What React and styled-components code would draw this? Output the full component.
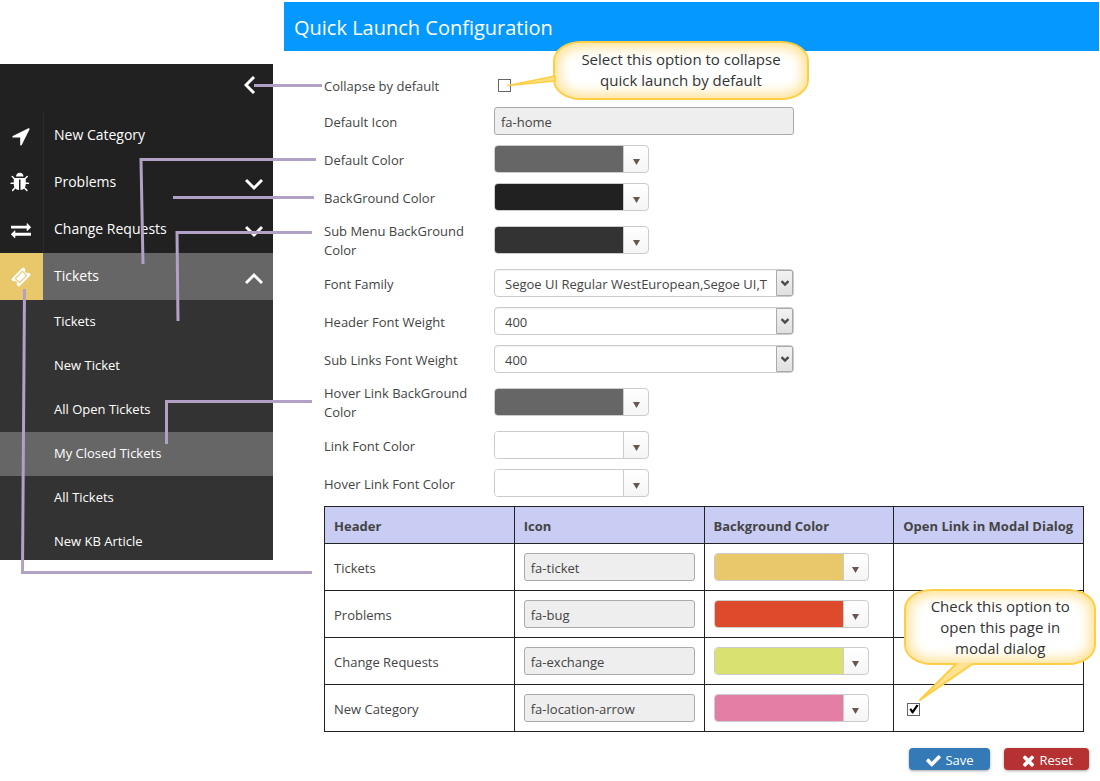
import React from 'react'
import styled, { createGlobalStyle } from 'styled-components'

const icons = {
  arrow:
    'M1593 349l-640 1280q-17 35-57 35-5 0-15-2-22-5-35.5-22.5t-13.5-39.5v-576h-576q-22 0-39.5-13.5t-22.5-35.5 4-42 29-30l1280-640q13-7 29-7 27 0 45 19 15 14 18.5 34.5t-6.5 39.5z',
  bug: 'M1632 960q0 26-19 45t-45 19h-224q0 171-67 290l208 209q19 19 19 45t-19 45q-18 19-45 19t-45-19l-198-197q-5 5-15 13t-42 28.5-65 36.5-82 29-97 13v-896h-128v896q-51 0-101.5-13.5t-87-33-66-39-43.5-32.5l-15-14-183 207q-20 21-48 21-24 0-43-16-19-18-20.5-44.5t15.5-46.5l202-227q-58-114-58-274h-224q-26 0-45-19t-19-45 19-45 45-19h224v-294l-173-173q-19-19-19-45t19-45 45-19 45 19l173 173h844l173-173q19-19 45-19t45 19 19 45-19 45l-173 173v294h224q26 0 45 19t19 45zm-480-576h-640q0-133 93.5-226.5t226.5-93.5 226.5 93.5 93.5 226.5z',
  exchange:
    'M1792 1184v192q0 13-9.5 22.5t-22.5 9.5h-1376v192q0 13-9.5 22.5t-22.5 9.5q-12 0-24-10l-319-320q-9-9-9-22 0-14 9-23l320-320q9-9 23-9 13 0 22.5 9.5t9.5 22.5v192h1376q13 0 22.5 9.5t9.5 22.5zm0-544q0 14-9 23l-320 320q-9 9-23 9-13 0-22.5-9.5t-9.5-22.5v-192h-1376q-13 0-22.5-9.5t-9.5-22.5v-192q0-13 9.5-22.5t22.5-9.5h1376v-192q0-14 9-23t23-9q12 0 24 10l319 319q9 9 9 23z',
  ticket:
    'M1024 452l316 316-572 572-316-316zm-211 979l618-618q19-19 19-45t-19-45l-362-362q-18-18-45-18t-45 18l-618 618q-19 19-19 45t19 45l362 362q18 18 45 18t45-18zm889-637l-907 908q-37 37-90.5 37t-90.5-37l-126-125q56-56 56-136t-56-136-136-56-136 56l-125-126q-37-37-37-90.5t37-90.5l907-906q37-37 90.5-37t90.5 37l125 125q-56 56-56 136t56 136 136 56 136-56l126 125q37 37 37 90.5t-37 90.5z',
  check:
    'M1671 566q0 40-28 68l-724 724-136 136q-28 28-68 28t-68-28l-136-136-362-362q-28-28-28-68t28-68l136-136q28-28 68-28t68 28l294 295 656-657q28-28 68-28t68 28l136 136q28 28 28 68z',
  times:
    'M1490 1322q0 40-28 68l-136 136q-28 28-68 28t-68-28l-294-294-294 294q-28 28-68 28t-68-28l-136-136q-28-28-28-68t28-68l294-294-294-294q-28-28-28-68t28-68l136-136q28-28 68-28t68 28l294 294 294-294q28-28 68-28t68 28l136 136q28 28 28 68t-28 68l-294 294 294 294q28 28 28 68z',
}

const Icon = ({ name, size }) => (
  <svg width={size} height={size} viewBox='0 0 1792 1792' fill='currentColor' aria-hidden='true'>
    <path d={icons[name]} />
  </svg>
)

const chevrons = {
  left: 'M10 1 L2 9 L10 17',
  down: 'M1 5 L9 13 L17 5',
  up: 'M1 14 L9 6 L17 14',
}

const Chevron = ({ dir }) => (
  <svg width='18' height='18' viewBox='0 0 18 18' fill='none' stroke='#fff' strokeWidth='3' aria-hidden='true'>
    <path d={chevrons[dir]} />
  </svg>
)

const menu = [
  { name: 'New Category', icon: 'arrow', size: 22 },
  { name: 'Problems', icon: 'bug', size: 21, chevron: 'down' },
  { name: 'Change Requests', icon: 'exchange', size: 20, chevron: 'down' },
  { name: 'Tickets', icon: 'ticket', size: 20, chevron: 'up', active: true },
]

const subMenu = ['Tickets', 'New Ticket', 'All Open Tickets', 'My Closed Tickets', 'All Tickets', 'New KB Article']

const fields = [
  { id: 'icon', label: 'Default Icon', type: 'text', value: 'fa-home' },
  { id: 'color', label: 'Default Color', type: 'color', value: '#666666' },
  { id: 'bg', label: 'BackGround Color', type: 'color', value: '#212121' },
  { id: 'sub-bg', label: 'Sub Menu BackGround Color', type: 'color', value: '#333333' },
  { id: 'font', label: 'Font Family', type: 'select', value: 'Segoe UI Regular WestEuropean,Segoe UI,T' },
  { id: 'header-weight', label: 'Header Font Weight', type: 'select', value: '400' },
  { id: 'sub-weight', label: 'Sub Links Font Weight', type: 'select', value: '400' },
  { id: 'hover-bg', label: 'Hover Link BackGround Color', type: 'color', value: '#666666' },
  { id: 'link', label: 'Link Font Color', type: 'color', value: '#ffffff' },
  { id: 'hover-link', label: 'Hover Link Font Color', type: 'color', value: '#ffffff' },
]

const rows = [
  { name: 'Tickets', icon: 'fa-ticket', color: '#e9c86c' },
  { name: 'Problems', icon: 'fa-bug', color: '#de4a2c' },
  { name: 'Change Requests', icon: 'fa-exchange', color: '#d9e170' },
  { name: 'New Category', icon: 'fa-location-arrow', color: '#e47ea5', modal: true },
]

const ColorPicker = ({ id, color, label }) => (
  <Picker type='button' id={id} aria-label={label}>
    <Swatch $color={color} />
    <PickerArrow>
      <svg width='7' height='6' viewBox='0 0 7 6' aria-hidden='true'>
        <path d='M0 0h7L3.5 6z' fill='#665850' />
      </svg>
    </PickerArrow>
  </Picker>
)

const Field = ({ id, type, value, label }) => {
  if (type === 'color') return <ColorPicker id={id} color={value} label={label} />
  if (type === 'text') return <TextInput id={id} defaultValue={value} />
  return (
    <SelectBox>
      <Select id={id} defaultValue={value}>
        <option>{value}</option>
      </Select>
      <SelectArrow>
        <svg width='8' height='7' viewBox='0 0 8 7' aria-hidden='true'>
          <path d='M0.5 1L4 4.5L7.5 1' fill='none' stroke='#4a4a4a' strokeWidth='2.4' />
        </svg>
      </SelectArrow>
    </SelectBox>
  )
}

const App = () => {
  return (
    <Page>
      <GlobalStyle />
      <Sidebar>
        <SidebarTop>
          <IconButton type='button' aria-label='Collapse'>
            <Chevron dir='left' />
          </IconButton>
        </SidebarTop>
        {menu.map((item) => (
          <MenuItem key={item.name} href='#' $active={item.active}>
            <MenuIcon $active={item.active}>
              <Icon name={item.icon} size={item.size} />
            </MenuIcon>
            <MenuText>{item.name}</MenuText>
            {item.chevron && (
              <MenuChevron>
                <Chevron dir={item.chevron} />
              </MenuChevron>
            )}
          </MenuItem>
        ))}
        <SubMenu>
          {subMenu.map((name) => (
            <SubLink key={name} href='#' $active={name === 'My Closed Tickets'}>
              {name}
            </SubLink>
          ))}
        </SubMenu>
      </Sidebar>

      <Main>
        <Title>Quick Launch Configuration</Title>
        <Body>
          <FormRow $short>
            <Label htmlFor='collapse'>Collapse by default</Label>
            <CheckHolder>
              <Checkbox id='collapse' />
              <CollapseCallout>
                <svg width='50' height='20' viewBox='0 0 50 20' aria-hidden='true'>
                  <path d='M49 5L2 14.5L49 10z' fill='#ffdf80' stroke='#ffce44' strokeWidth='1.6' strokeLinejoin='round' />
                </svg>
                Select this option to collapse
                <br />
                quick launch by default
              </CollapseCallout>
            </CheckHolder>
          </FormRow>
          {fields.map((field) => (
            <FormRow key={field.id}>
              <Label htmlFor={field.id}>{field.label}</Label>
              <Field {...field} />
            </FormRow>
          ))}

          <Table>
            <thead>
              <tr>
                <th>Header</th>
                <th>Icon</th>
                <th>Background Color</th>
                <th>Open Link in Modal Dialog</th>
              </tr>
            </thead>
            <tbody>
              {rows.map((row) => (
                <tr key={row.name}>
                  <td>{row.name}</td>
                  <td>
                    <TextInput defaultValue={row.icon} aria-label={`${row.name} icon`} />
                  </td>
                  <td>
                    <ColorPicker color={row.color} label={`${row.name} background color`} />
                  </td>
                  <td>
                    {row.modal && (
                      <CheckHolder>
                        <Checkbox defaultChecked aria-label='Open New Category in modal dialog' />
                        <ModalCallout>
                          Check this option to
                          <br />
                          open this page in
                          <br />
                          modal dialog
                          <svg width='60' height='40' viewBox='0 0 60 40' aria-hidden='true'>
                            <path d='M39 0L2 37L56 0' fill='#ffe391' stroke='#ffce44' strokeWidth='2' strokeLinejoin='round' />
                          </svg>
                        </ModalCallout>
                      </CheckHolder>
                    )}
                  </td>
                </tr>
              ))}
            </tbody>
          </Table>
        </Body>
        <Actions>
          <Button type='button'>
            <Icon name='check' size={17} /> Save
          </Button>
          <Button type='button' $danger>
            <Icon name='times' size={17} /> Reset
          </Button>
        </Actions>
      </Main>

      {/* lines from the menu parts to the settings that change them */}
      <Connectors width='330' height='600' viewBox='0 0 330 600' aria-hidden='true'>
        <path d='M254 85.5H322' />
        <path d='M143 264L141 159.5H316' />
        <path d='M173 197.5H314' />
        <path d='M178 321L177 232.5H312' />
        <path d='M166.5 444V401.5H312' />
        <path d='M24.5 289L22.5 572.5H312' />
      </Connectors>
    </Page>
  )
}

const Checkbox = styled.input.attrs({ type: 'checkbox' })`
  appearance: none;
  display: block;
  width: 13px;
  height: 13px;
  margin: 0;
  background: #fff;
  border: 1px solid #666;
  &:checked::after {
    content: '';
    display: block;
    width: 11px;
    height: 11px;
    background: #000;
    clip-path: polygon(10% 52%, 26% 44%, 40% 62%, 76% 8%, 94% 18%, 44% 92%, 34% 92%);
  }
`

const GlobalStyle = createGlobalStyle`
  * {
    box-sizing: border-box;
  }
  body {
    margin: 0;
    background: #fff;
    color: #444;
    font: 13px/19px 'Open Sans', 'Noto Sans', sans-serif;
  }
  button, input, select {
    font: inherit;
    color: inherit;
  }
`

const Page = styled.div`
  position: relative;
  display: flex;
  align-items: flex-start;
  gap: 11px;
  padding: 2px 1px 10px 0;
`

const Sidebar = styled.nav`
  flex: 0 0 273px;
  margin-top: 62px;
  background: #212121;
  color: #fff;
`

const SidebarTop = styled.div`
  display: flex;
  justify-content: flex-end;
  height: 48px;
  padding: 12px 11px 0;
`

const IconButton = styled.button`
  height: 18px;
  padding: 0;
  border: 0;
  background: none;
  cursor: pointer;
  svg {
    display: block;
  }
`

const MenuItem = styled.a`
  display: flex;
  height: 47px;
  background: ${({ $active }) => ($active ? '#666' : '#212121')};
  color: #fff;
  font-size: 14px;
  text-decoration: none;
`

const MenuIcon = styled.span`
  display: flex;
  align-items: center;
  justify-content: center;
  width: 44px;
  padding-right: 2px;
  border-right: 1px solid ${({ $active }) => ($active ? '#666' : '#2c2c2c')};
  background: ${({ $active }) => ($active ? '#e9c86c' : 'none')};
`

const MenuText = styled.span`
  flex: 1;
  padding-left: 10px;
  line-height: 45px;
`

const MenuChevron = styled.span`
  padding: 16px 10px 0;
`

const SubMenu = styled.div`
  background: #333;
`

const SubLink = styled.a`
  display: block;
  height: 44px;
  padding-left: 54px;
  background: ${({ $active }) => ($active ? '#666' : 'none')};
  color: #fff;
  line-height: 42px;
  text-decoration: none;
  &:last-child {
    height: 40px;
  }
`

const Main = styled.main`
  flex: 1;
  min-width: 0;
`

const Title = styled.h1`
  margin: 0;
  padding: 2px 10px 0;
  background: #0599ff;
  color: #fff;
  font-size: 20px;
  font-weight: 400;
  line-height: 47px;
`

const Body = styled.div`
  padding: 17px 15px 0 40px;
`

const FormRow = styled.div`
  display: grid;
  grid-template-columns: 150px minmax(0, 300px);
  column-gap: 20px;
  align-items: center;
  min-height: ${({ $short }) => ($short ? '34px' : '38px')};
  padding: 4px 0;
`

const Label = styled.label`
  padding-top: 2px;
`

const CheckHolder = styled.div`
  position: relative;
  width: 13px;
  margin-left: 4px;
`

const TextInput = styled.input`
  display: block;
  width: 100%;
  height: 28px;
  padding: 2px 6px 0;
  background: #eee;
  border: 1px solid #aaa;
  border-radius: 3px;
`

const Picker = styled.button`
  display: flex;
  width: 155px;
  height: 28px;
  padding: 0;
  overflow: hidden;
  background: linear-gradient(#fff, #f5f5f5);
  border: 1px solid #ccc;
  border-radius: 4px;
  cursor: pointer;
`

const Swatch = styled.span`
  flex: 1;
  height: 100%;
  background: ${({ $color }) => $color};
`

const PickerArrow = styled.span`
  display: flex;
  align-items: center;
  justify-content: center;
  width: 25px;
  height: 100%;
  padding-top: 5px;
  border-left: 1px solid #ccc;
`

const SelectBox = styled.div`
  position: relative;
`

const Select = styled.select`
  appearance: none;
  display: block;
  width: 100%;
  height: 28px;
  padding: 2px 20px 0 10px;
  background: #fff;
  border: 1px solid #ccc;
  border-radius: 4px;
  box-shadow: inset 0 1px 1px rgba(0, 0, 0, 0.06);
`

const SelectArrow = styled.span`
  position: absolute;
  top: 1px;
  right: 1px;
  display: flex;
  align-items: center;
  justify-content: center;
  width: 17px;
  height: 26px;
  background: linear-gradient(#f2f2f2, #e0e0e0);
  border: 1px solid #aaa;
  border-radius: 0 2px 2px 0;
  pointer-events: none;
`

const Table = styled.table`
  width: 100%;
  margin-top: 4px;
  border-collapse: collapse;
  table-layout: fixed;
  th,
  td {
    height: 47px;
    padding: 2px 9px 0;
    border: 1px solid #222;
    text-align: left;
  }
  th {
    height: 37px;
    white-space: nowrap;
  }
  thead {
    background: #c9ccf3;
  }
  ${TextInput}, ${Picker} {
    margin-top: -2px;
  }
`

const Actions = styled.div`
  display: flex;
  justify-content: flex-end;
  gap: 14px;
  padding: 16px 10px 0;
`

const Button = styled.button`
  display: flex;
  align-items: center;
  gap: 3px;
  height: 22px;
  padding: 2px 16px 0;
  background: ${({ $danger }) => ($danger ? '#b53132' : '#337ab7')};
  border: 0;
  border-radius: 4px;
  box-shadow: 0 1px 3px rgba(0, 0, 0, 0.35);
  color: #fff;
  cursor: pointer;
`

const Callout = styled.div`
  position: absolute;
  z-index: 1;
  background: #fff;
  border: 2px solid #ffce44;
  border-radius: 28px / 20px;
  box-shadow: inset 0 0 14px 3px #ffdc80;
  color: #333;
  font-size: 15px;
  line-height: 21px;
  text-align: center;
  white-space: nowrap;
  svg {
    position: absolute;
  }
`

const CollapseCallout = styled(Callout)`
  top: -38px;
  left: 55px;
  width: 256px;
  padding: 6px 0 7px;
  svg {
    top: 28px;
    left: -49px;
  }
`

const ModalCallout = styled(Callout)`
  top: -114px;
  left: -3px;
  width: 192px;
  padding: 5px 0 4px;
  svg {
    top: 72px;
    left: 12px;
  }
`

const Connectors = styled.svg`
  position: absolute;
  top: 0;
  left: 0;
  pointer-events: none;
  path {
    fill: none;
    stroke: #b2a1c7;
    stroke-width: 3;
  }
`

export default App
